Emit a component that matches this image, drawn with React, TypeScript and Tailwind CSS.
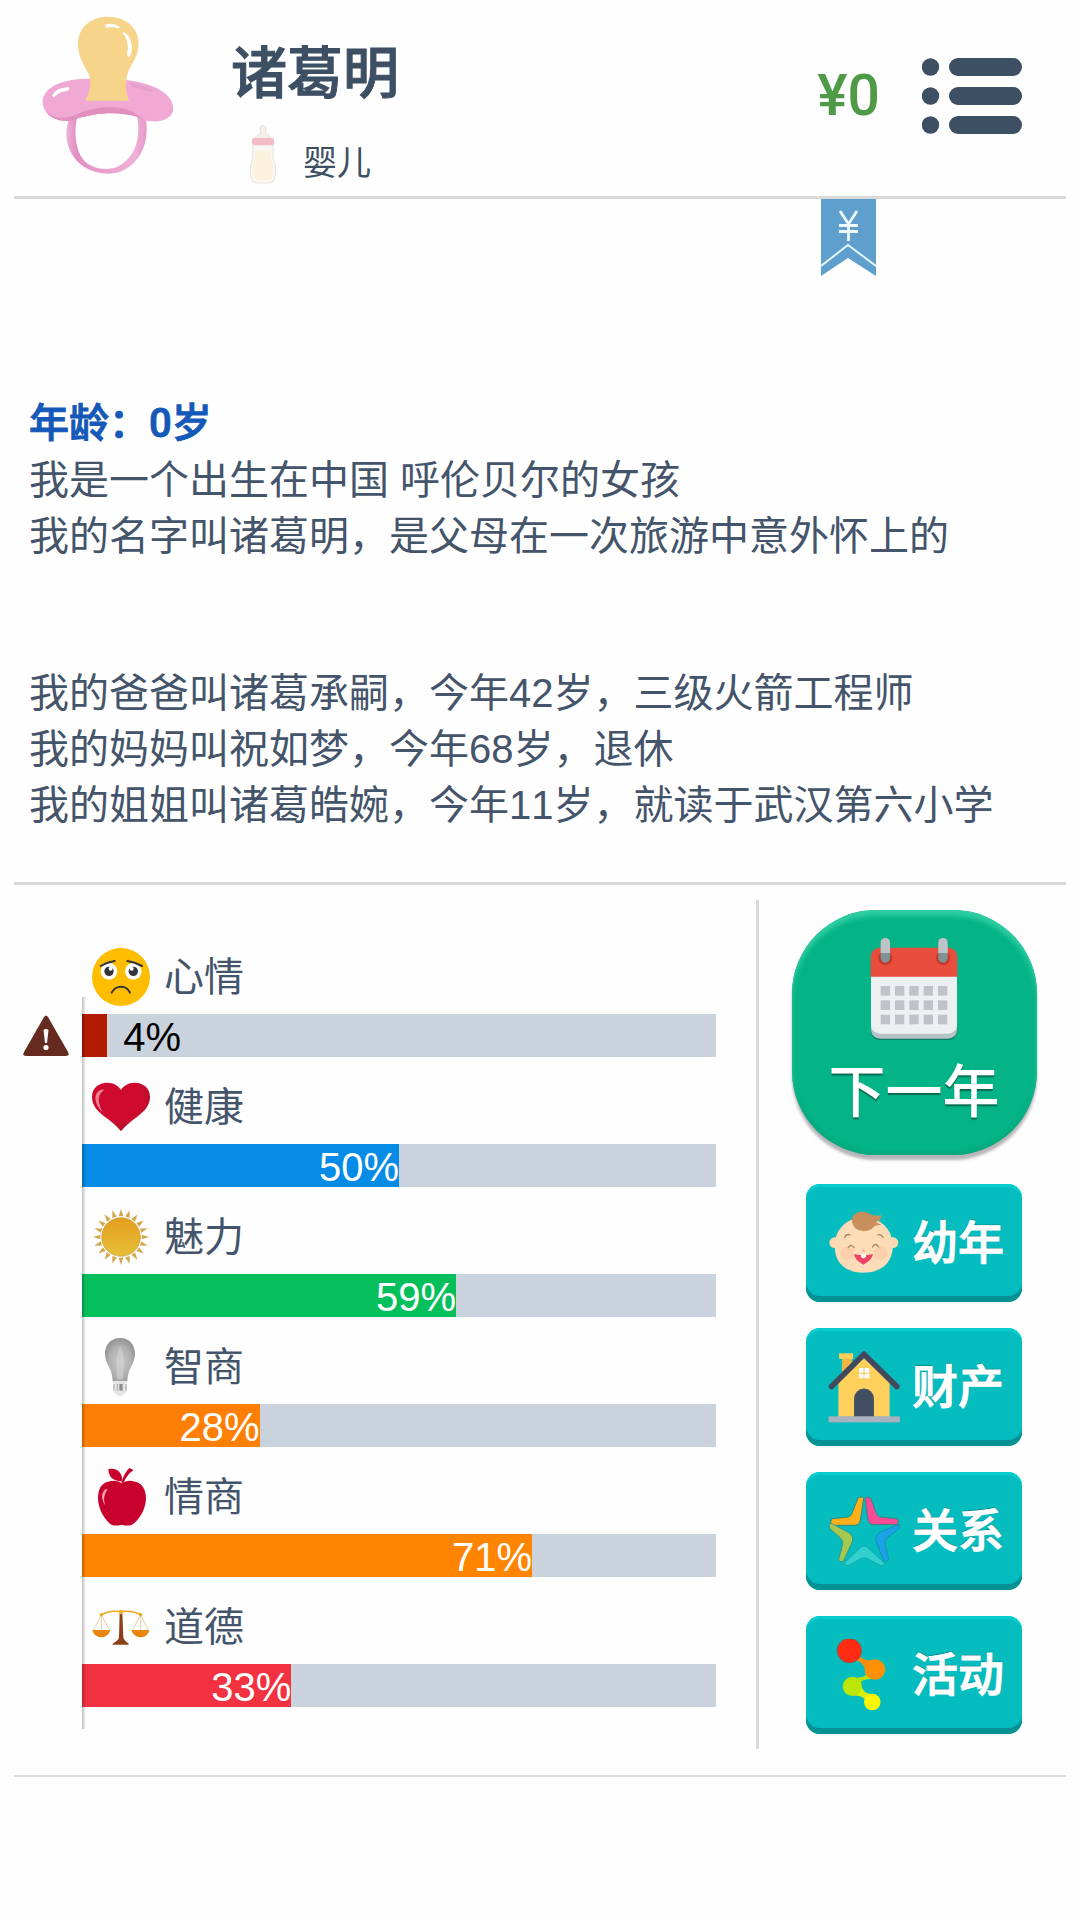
import type { ReactNode } from "react";

type Stat = {
  label: string;
  value: number;
  barClass: string;
  icon: ReactNode;
};

type Action = {
  label: string;
  icon: ReactNode;
};

function PacifierIcon() {
  return (
    <svg viewBox="123 48 384 474" preserveAspectRatio="none" className="h-[158px] w-[132px] shrink-0" aria-hidden="true">
      <defs>
        <linearGradient id="ring" x1="0" x2="1">
          <stop offset="0" stopColor="#efb0d8" />
          <stop offset="0.12" stopColor="#e191c2" />
          <stop offset="0.85" stopColor="#efb0d8" />
          <stop offset="1" stopColor="#e698c8" />
        </linearGradient>
      </defs>
      <path
        fillRule="evenodd"
        fill="url(#ring)"
        d="M204 352C184 400 196 450 224 482C250 510 285 521 318 521C352 521 382 502 402 474C428 438 432 390 424 350Q315 290 204 352ZM226 348C214 400 222 450 242 478C260 500 288 508 314 507C342 506 368 488 384 462C406 428 406 385 399 348Q315 310 226 348Z"
      />
      <path
        fill="#efa9d4"
        d="M125 300C132 258 185 236 262 236L368 240C446 250 505 280 505 326C503 356 470 368 430 363C400 344 365 340 315 340C275 342 240 350 208 362C160 366 122 342 125 300Z"
      />
      <path fill="#e08fc0" d="M135 335C165 362 205 355 235 338C280 318 350 316 385 334C400 344 415 356 428 362C395 346 360 340 315 340C275 342 240 350 208 362C175 366 148 355 135 335Z" />
      <path fill="#e79fcd" d="M378 248Q430 258 455 276Q420 272 385 262Z" />
      <path
        fill="#f6d58b"
        d="M248 302C262 280 270 246 258 220C240 190 228 165 228 132C228 82 265 50 315 50C367 50 404 84 404 130C404 165 385 190 374 214C364 245 366 275 376 302Z"
      />
      <path d="M307 74Q328 66 349 80Q350 86 342 85Q325 78 312 84Q305 80 307 74Z" fill="#fff" />
      <path d="M358 95Q382 105 385 140Q385 165 374 172Q368 168 373 145Q372 115 359 101Z" fill="#fff" />
      <path d="M152 288Q160 264 200 261Q208 267 195 273Q172 276 158 292Z" fill="#fff" />
    </svg>
  );
}

function BottleIcon() {
  return (
    <svg viewBox="0 0 28 60" className="h-[60px] w-7" aria-hidden="true">
      <path d="M11 3Q14 0 17 3L16 9Q24 13 24 20H4Q4 13 12 9Z" fill="#f6f0ec" stroke="#e6dfda" />
      <path d="M4 21H24L24 34Q29 46 25 56Q24 59 20 59H8Q4 59 3 56Q-1 46 4 34Z" fill="#fbf8f3" stroke="#e8e0d8" />
      <path d="M6 27H22V36Q26 46 23 55Q14 57 5 55Q2 46 6 36Z" fill="#fbf1dc" />
      <rect x="3" y="14" width="22" height="7" rx="2" fill="#f4bcc6" />
    </svg>
  );
}

function ListIcon() {
  return (
    <svg viewBox="0 0 100 76" className="h-[76px] w-[100px]" fill="#3c4f63" aria-hidden="true">
      {[9, 38, 67].map((y) => (
        <g key={y}>
          <circle cx="8.5" cy={y} r="8.7" />
          <rect x="27" y={y - 9} width="73" height="18" rx="9" />
        </g>
      ))}
    </svg>
  );
}

function RibbonIcon() {
  return (
    <svg viewBox="0 0 55 77" className="h-[77px] w-[55px]" aria-hidden="true">
      <path d="M0 0H55V77L27 59L0 77Z" fill="#5f9fcd" />
      <path d="M0 67L27 46L55 67" fill="none" stroke="#e6f8ff" strokeWidth="2" />
      <path d="M19 12L27.500 25L36 12M27.500 24V42M18 26.500H37M18 32.500H37" fill="none" stroke="#eefaff" strokeWidth="2.800" />
    </svg>
  );
}

function WarningIcon() {
  return (
    <svg viewBox="0 0 46 41" className="h-[41px] w-[46px]" aria-hidden="true">
      <path d="M21 2Q23 -1 25 2L45 37Q47 41 43 41H3Q-1 41 1 37Z" fill="#652a20" />
      <path d="M20.500 15Q23 13 25.500 15L24 28H22Z" fill="#fff" />
      <circle cx="23" cy="32.500" r="2.600" fill="#fff" />
    </svg>
  );
}

function SadIcon() {
  return (
    <svg viewBox="0 0 174 174" className="size-[58px]" aria-hidden="true">
      <circle cx="87" cy="87" r="87" fill="#ffbd00" />
      <circle cx="51" cy="70" r="25" fill="#fff" />
      <circle cx="124" cy="70" r="25" fill="#fff" />
      <circle cx="51" cy="70" r="14" fill="#33343a" />
      <circle cx="124" cy="70" r="14" fill="#33343a" />
      <circle cx="56" cy="62" r="6" fill="#fff" />
      <circle cx="119" cy="62" r="6" fill="#fff" />
      <path d="M26 54Q46 42 68 39M150 54Q128 42 106 39" fill="none" stroke="#33343a" strokeWidth="6" strokeLinecap="round" />
      <path d="M59 134Q68 116 87 116Q106 116 114 134" fill="none" stroke="#33343a" strokeWidth="6" strokeLinecap="round" />
    </svg>
  );
}

function HeartIcon() {
  return (
    <svg viewBox="0 0 174 174" className="size-[58px]" aria-hidden="true">
      <defs>
        <radialGradient id="heart" cx="0.45" cy="0.35" r="0.7">
          <stop offset="0.6" stopColor="#cf0a2e" />
          <stop offset="1" stopColor="#a3152a" />
        </radialGradient>
      </defs>
      <path d="M87 160Q70 138 38 116C10 94 0 78 0 56C0 30 20 14 46 14C66 14 80 24 87 36C94 24 108 14 128 14C154 14 174 30 174 56C174 78 164 94 136 116Q104 138 87 160Z" fill="url(#heart)" />
      <path d="M34 34Q10 38 10 62Q14 88 32 102Q20 80 20 62Q22 46 34 38Z" fill="#ee8090" />
    </svg>
  );
}

function SunIcon() {
  const rays = Array.from({ length: 20 }, (_, i) => i * 18);

  return (
    <svg viewBox="0 0 174 174" className="size-[58px]" aria-hidden="true">
      <defs>
        <linearGradient id="sun" x1="0" x2="0" y1="0" y2="1">
          <stop offset="0" stopColor="#e39e1e" />
          <stop offset="1" stopColor="#e6bf38" />
        </linearGradient>
      </defs>
      {rays.map((angle) => (
        <path key={angle} d="M80 25L87 3L94 25Z" fill="#d3a84a" transform={`rotate(${angle} 87 87)`} />
      ))}
      <circle cx="87" cy="87" r="58" fill="url(#sun)" stroke="#c9973a" strokeWidth="2" />
    </svg>
  );
}

function BulbIcon() {
  return (
    <svg viewBox="0 0 174 174" className="size-[58px]" aria-hidden="true">
      <defs>
        <radialGradient id="bulb" cx="0.5" cy="0.55" r="0.6">
          <stop offset="0" stopColor="#c9c9c9" />
          <stop offset="0.6" stopColor="#b0b0b0" />
          <stop offset="1" stopColor="#8c8c8c" />
        </radialGradient>
      </defs>
      <path d="M85 0C56 0 38 22 39 50C40 78 62 92 62 130H106C106 92 128 78 129 50C130 22 112 0 85 0Z" fill="url(#bulb)" />
      <path d="M85 24Q68 55 76 124H92Q104 60 85 24Z" fill="#d2d2d2" opacity="0.6" />
      <path d="M64 131H104V160Q94 174 84 174Q72 172 64 160Z" fill="#e4e4e4" />
      <path d="M66 138V158M102 138V158M76 138V158" stroke="#a6a6a6" strokeWidth="3" />
      <path d="M82 138H92V158H82Z" fill="#8d8d8d" />
    </svg>
  );
}

function AppleIcon() {
  return (
    <svg viewBox="0 0 174 174" className="size-[58px]" aria-hidden="true">
      <path d="M89 46Q75 34 48 41C26 46 18 66 18 92C20 126 38 155 58 170Q72 175 89 170Q106 175 120 170C142 155 160 126 162 92C162 66 152 46 130 41Q104 34 89 46Z" fill="#c8002d" />
      <path d="M49 3Q90 -2 91 40Q50 40 49 3Z" fill="#c8002d" />
      <path d="M88 44Q98 12 112 0L125 6Q104 20 95 44Z" fill="#c8002d" />
      <path d="M42 62Q20 80 39 112Q31 84 46 66Z" fill="#f0a4b0" />
    </svg>
  );
}

function ScalesIcon() {
  return (
    <svg viewBox="0 0 174 174" className="size-[58px]" aria-hidden="true">
      <path d="M28 51Q50 36 87 41Q124 36 146 51" fill="none" stroke="#e9a91f" strokeWidth="5" />
      <path d="M28 51L4 97M28 51V97M28 51L53 97M146 51L121 97M146 51V97M146 51L170 97" fill="none" stroke="#dcb878" strokeWidth="2" />
      <path d="M1 96H55Q50 117 28 118Q6 117 1 96ZM118 96H172Q168 117 146 118Q124 117 118 96Z" fill="#e8860c" />
      <path d="M83 44H91L94 118Q96 128 110 137V140H62V137Q79 128 81 118Z" fill="#8a4018" />
      <circle cx="87" cy="42" r="7" fill="#f2b32c" />
      <circle cx="28" cy="50" r="5" fill="#e9a91f" />
      <circle cx="146" cy="50" r="5" fill="#e9a91f" />
    </svg>
  );
}

function CalendarIcon() {
  return (
    <svg viewBox="0 0 262 306" className="h-[102px] w-[88px]" aria-hidden="true">
      <path d="M2 120H260V280Q258 306 232 306H30Q4 306 2 280Z" fill="#0b7e62" />
      <path d="M2 120H260V276Q258 302 232 302H30Q4 302 2 276Z" fill="#b5c3c6" />
      <path d="M2 110H260V262Q258 287 232 287H30Q4 287 2 262Z" fill="#ecf0f1" />
      <path d="M1 116V56Q3 30 29 29H234Q259 30 261 56V116Z" fill="#e74c3c" />
      {[45, 218].map((x) => (
        <g key={x}>
          <circle cx={x} cy="60" r="21" fill="#c0392b" />
          <rect x={x - 14} y="0" width="28" height="74" rx="14" fill="#7f9394" />
          <path d={`M${x - 14} 45V14a14 14 0 0 1 28 0V45Z`} fill="#bdc3c7" />
        </g>
      ))}
      {[144, 187, 230].map((y) =>
        [31, 74, 117, 160, 203].map((x) => (
          <rect key={`${x}-${y}`} x={x} y={y} width="28" height="29" fill="#bdc3c7" />
        ))
      )}
    </svg>
  );
}

function BabyIcon() {
  return (
    <svg viewBox="144 144 216 216" className="size-[72px] shrink-0" aria-hidden="true">
      <circle cx="164" cy="251" r="16" fill="#fbd9b3" />
      <circle cx="339" cy="251" r="16" fill="#fbd9b3" />
      <path d="M251 175C300 175 335 210 338 252C342 300 315 341 250 341C186 341 160 300 165 252C168 210 202 175 251 175Z" fill="#fcdcb6" />
      <circle cx="201" cy="283" r="20" fill="#f9c4a0" opacity="0.5" />
      <circle cx="302" cy="283" r="20" fill="#f9c4a0" opacity="0.5" />
      <path d="M219 170Q236 153 262 161Q284 174 304 168Q306 184 288 190L305 198Q284 196 275 210Q246 224 226 208Q210 188 219 170Z" fill="#c78f5c" />
      <path d="M194 235Q200 223 210 228M294 228Q303 224 309 235M205 266Q212 252 222 266M278 264Q287 249 296 264" fill="none" stroke="#a5805c" strokeWidth="4" strokeLinecap="round" />
      <path d="M222 285Q250 293 279 285Q276 303 250 317Q224 303 222 285Z" fill="#ee4564" />
      <path d="M243 286H258V294Q250 301 243 294Z" fill="#fff" />
      <circle cx="250" cy="274" r="4" fill="#f3bd98" />
    </svg>
  );
}

function HouseIcon() {
  return (
    <svg viewBox="144 574 216 220" className="h-[73px] w-[72px] shrink-0" aria-hidden="true">
      <path d="M186 597H215V640L186 660Z" fill="#f2b544" />
      <rect x="177" y="581" width="42" height="17" fill="#ffcf57" />
      <path d="M175 665L252 595L329 665V772H175Z" fill="#ffd15c" />
      <path d="M154 681L252 584L351 681" fill="none" stroke="#41495c" strokeWidth="17" strokeLinecap="round" />
      <path d="M222 772V718A30 31 0 0 1 282 718V772Z" fill="#435063" />
      <rect x="237" y="625" width="31" height="31" rx="3" fill="#fff" />
      <path d="M252 625V656M237 641H268" stroke="#f0c75c" strokeWidth="3" />
      <rect x="145" y="771" width="215" height="18" fill="#aab1c0" />
    </svg>
  );
}

function StarIcon() {
  return (
    <svg viewBox="144 132 216 216" className="size-[72px] shrink-0" strokeLinejoin="round" strokeWidth="3" aria-hidden="true">
      <path d="M234 142Q244 133 251 143L241 208Q238 222 226 223H155Q148 212 156 203L205 198Q212 196 215 189Z" fill="#fdb01a" stroke="#38867c" />
      <path d="M255 143Q262 133 272 142L290 189Q293 196 300 198L351 203Q360 210 351 221H278Q267 220 264 208Z" fill="#f94a97" stroke="#38867c" />
      <path d="M147 224Q149 215 158 219L210 247Q222 258 218 270L191 329Q180 337 176 325L188 280Q190 270 182 262L150 233Z" fill="#a4c850" stroke="#38958a" />
      <path d="M358 220L302 242Q284 254 287 268L311 329Q322 335 326 323L315 279Q313 268 322 260L357 233Z" fill="#1aa2e8" stroke="#1692a5" />
      <path d="M193 336L240 290Q252 279 264 290L313 336Q314 347 300 343L264 324Q252 318 240 324L207 343Q194 346 193 336Z" fill="#31d0ce" stroke="#12a9a8" />
    </svg>
  );
}

function ActivityIcon() {
  return (
    <svg viewBox="144 568 216 220" className="h-[73px] w-[72px] shrink-0" aria-hidden="true">
      <path d="M232 610Q244 632 270 632L262 676Q252 634 222 632Z" fill="#f98a10" />
      <path d="M262 662Q262 684 232 684L236 708Q240 688 280 688Z" fill="#b5e010" />
      <path d="M240 700Q246 730 272 734L258 756Q252 738 222 738Z" fill="#dcee06" />
      <circle cx="208" cy="603" r="37" fill="#ff2b13" stroke="#4a7168" strokeWidth="2" />
      <circle cx="285" cy="660" r="31" fill="#ff9003" />
      <circle cx="217" cy="711" r="29" fill="#bce605" />
      <circle cx="277" cy="758" r="25" fill="#fbf500" />
    </svg>
  );
}

const stats: Stat[] = [
  { label: "心情", value: 4, barClass: "bg-[#b31b00]", icon: <SadIcon /> },
  { label: "健康", value: 50, barClass: "bg-[#068be6]", icon: <HeartIcon /> },
  { label: "魅力", value: 59, barClass: "bg-[#05bf5c]", icon: <SunIcon /> },
  { label: "智商", value: 28, barClass: "bg-[#ff7f05]", icon: <BulbIcon /> },
  { label: "情商", value: 71, barClass: "bg-[#ff8500]", icon: <AppleIcon /> },
  { label: "道德", value: 33, barClass: "bg-[#f23241]", icon: <ScalesIcon /> },
];

const actions: Action[] = [
  { label: "幼年", icon: <BabyIcon /> },
  { label: "财产", icon: <HouseIcon /> },
  { label: "关系", icon: <StarIcon /> },
  { label: "活动", icon: <ActivityIcon /> },
];

// below this the number no longer fits inside the filled part
const LOW_VALUE = 15;

function StatRow({ label, value, barClass, icon }: Stat) {
  const isLow = value < LOW_VALUE;

  return (
    <div>
      <div className="flex h-[87px] items-center gap-[14px] pt-[13px] pl-[10px]">
        {icon}
        <span>{label}</span>
      </div>
      <div
        role="progressbar"
        aria-label={label}
        aria-valuenow={value}
        className="relative flex h-[43px] items-center bg-[#c9d2dd] text-[40px] leading-[46px]"
      >
        {isLow && (
          <span className="absolute right-full mr-[13px]">
            <WarningIcon />
          </span>
        )}
        <div className={`h-full text-right text-white ${barClass}`} style={{ width: `${value}%` }}>
          {!isLow && `${value}%`}
        </div>
        {isLow && <span className="ml-4 h-full text-black">{value}%</span>}
      </div>
    </div>
  );
}

export default function App() {
  return (
    <div className="min-h-screen bg-[#fefefe] px-[14px] font-['Liberation_Sans','Noto_Sans_CJK_SC',sans-serif] text-[40px] leading-[56px] text-[#44546a] [font-kerning:none]">
      <header className="flex h-[199px] border-b-[3px] border-[#d9d9d9] pt-4 pr-11 pl-7 text-[#3c4f63]">
        <PacifierIcon />
        <div className="ml-[57px] flex-1">
          <h1 className="pt-[26px] text-[56px] leading-[64px] font-medium [-webkit-text-stroke:1px_#3c4f63]">诸葛明</h1>
          <div className="flex items-center gap-[26px] pt-[18px] pl-[18px]">
            <BottleIcon />
            <span className="pt-[18px] text-[34px] leading-10">婴儿</span>
          </div>
        </div>
        <div className="flex h-[160px] items-center gap-[42px]">
          <span className="font-['Roboto','Noto_Sans_CJK_SC',sans-serif] text-[57px] font-medium text-[#4e9a47]">¥0</span>
          <button type="button" aria-label="菜单">
            <ListIcon />
          </button>
        </div>
      </header>

      <main>
        <section className="border-b-[3px] border-[#d9d9d9] pb-[49px]">
          <div className="flex justify-end pr-[190px]">
            <button type="button" aria-label="财务">
              <RibbonIcon />
            </button>
          </div>
          <div className="px-[15px] pt-[120px]">
            <h2 className="font-['Roboto','Noto_Sans_CJK_SC',sans-serif] font-medium text-[#1459b8] [-webkit-text-stroke:1px_#1459b8]">
              年龄：0岁
            </h2>
            <p>我是一个出生在中国 呼伦贝尔的女孩</p>
            <p>我的名字叫诸葛明，是父母在一次旅游中意外怀上的</p>
            <div className="pt-[101px]">
              <p>我的爸爸叫诸葛承嗣，今年42岁，三级火箭工程师</p>
              <p>我的妈妈叫祝如梦，今年68岁，退休</p>
              <p>我的姐姐叫诸葛皓婉，今年11岁，就读于武汉第六小学</p>
            </div>
          </div>
        </section>

        <section className="flex border-b-2 border-[#d9d9d9] pt-[15px] pb-[26px]">
          <div className="flex-1 border-r-[3px] border-[#d9d9d9] pt-[27px] pr-10 pb-[42px] pl-[68px]">
            <div className="relative">
              {stats.map((stat) => (
                <StatRow key={stat.label} {...stat} />
              ))}
              <span className="absolute top-[70px] -bottom-[22px] left-0 w-1 bg-linear-to-r from-black/25 to-transparent" />
            </div>
          </div>

          <div className="flex w-[307px] flex-col items-center gap-[26px] pt-[10px] pl-[3px]">
            <button
              type="button"
              className="mb-[3px] flex size-[245px] flex-col items-center rounded-[84px] bg-[#04b386] pt-7 text-[57px] leading-[64px] font-medium text-white shadow-[inset_0_6px_5px_#30cda3,inset_0_-3px_4px_#06a67b,0_5px_3px_#b5b5b9] [text-shadow:0_2px_1px_#086a50]"
            >
              <CalendarIcon />
              <span className="mt-5">下一年</span>
            </button>
            {actions.map((action) => (
              <button
                key={action.label}
                type="button"
                className="flex h-[118px] w-[216px] items-center gap-3 rounded-[14px] bg-[#05bdbf] pl-[22px] text-[46px] leading-[56px] font-medium text-white shadow-[inset_0_3px_1px_#08cfce,inset_0_-6px_0_#069294] [-webkit-text-stroke:1px_#fff] [text-shadow:0_-1px_1px_#086a6c]"
              >
                {action.icon}
                <span>{action.label}</span>
              </button>
            ))}
          </div>
        </section>
      </main>
    </div>
  );
}
